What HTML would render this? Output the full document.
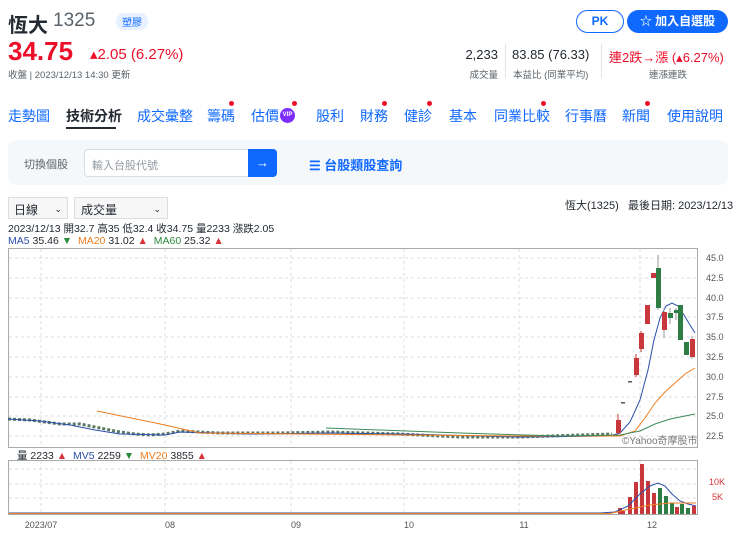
<!DOCTYPE html>
<html><head><meta charset="utf-8"><style>
*{margin:0;padding:0;box-sizing:border-box}
body{width:735px;height:540px;background:#fff;font-family:"Liberation Sans","Noto Sans CJK TC",sans-serif;position:relative;overflow:hidden;color:#232a31}
.a{position:absolute;white-space:nowrap}
.tab{position:absolute;top:106px;font-size:14px;color:#0f69ff}
.dot{position:absolute;width:5px;height:5px;border-radius:50%;background:#eb0f29}
</style></head><body>
<div class="a" style="left:8px;top:9px;font-size:20px;font-weight:bold">恆大</div>
<div class="a" style="left:53px;top:10px;font-size:19px;color:#5b636a">1325</div>
<div class="a" style="left:116px;top:13px;font-size:10px;color:#0f69ff;background:#e6f0ff;border-radius:8px;padding:1px 6px">塑膠</div>
<div class="a" style="left:576px;top:10px;width:48px;height:23px;border:1px solid #0f69ff;border-radius:12px;color:#0f69ff;font-size:12px;font-weight:bold;text-align:center;line-height:21px">PK</div>
<div class="a" style="left:627px;top:10px;width:101px;height:23px;background:#0f69ff;border-radius:12px;color:#fff;font-size:12px;font-weight:bold;text-align:center;line-height:23px">☆ 加入自選股</div>
<div class="a" style="left:8px;top:36px;font-size:26px;font-weight:bold;color:#eb0f29">34.75</div>
<div class="a" style="left:90px;top:45px;font-size:15px;color:#eb0f29">▴2.05 (6.27%)</div>
<div class="a" style="left:8px;top:67px;font-size:9.5px;color:#5b636a">收盤 | 2023/12/13 14:30 更新</div>
<div class="a" style="left:460px;top:47px;width:38px;text-align:right;font-size:13px">2,233</div>
<div class="a" style="left:460px;top:67px;width:38px;text-align:right;font-size:9.5px;color:#5b636a">成交量</div>
<div class="a" style="left:505px;top:44px;width:1px;height:34px;background:#e0e4e9"></div>
<div class="a" style="left:512px;top:47px;font-size:13px">83.85 (76.33)</div>
<div class="a" style="left:513px;top:67px;font-size:9.5px;color:#5b636a">本益比 (同業平均)</div>
<div class="a" style="left:601px;top:44px;width:1px;height:34px;background:#e0e4e9"></div>
<div class="a" style="left:609px;top:47px;font-size:13px;color:#eb0f29">連2跌→漲 (▴6.27%)</div>
<div class="a" style="left:649px;top:67px;font-size:9.5px;color:#5b636a">連漲連跌</div>
<div class="tab" style="left:8px">走勢圖</div>
<div class="tab" style="left:66px;color:#232a31;font-weight:bold">技術分析</div>
<div class="a" style="left:66px;top:127px;width:50px;height:2px;background:#232a31"></div>
<div class="tab" style="left:137px">成交彙整</div>
<div class="tab" style="left:207px">籌碼</div><div class="dot" style="left:229px;top:101px"></div>
<div class="tab" style="left:251px">估價</div><div class="a" style="left:280px;top:108px;width:15px;height:15px;border-radius:50%;background:#7d2eff;color:#fff;font-size:6px;font-weight:bold;text-align:center;line-height:15px">VIP</div><div class="dot" style="left:292px;top:101px"></div>
<div class="tab" style="left:316px">股利</div>
<div class="tab" style="left:360px">財務</div><div class="dot" style="left:382px;top:101px"></div>
<div class="tab" style="left:404px">健診</div><div class="dot" style="left:427px;top:101px"></div>
<div class="tab" style="left:449px">基本</div>
<div class="tab" style="left:494px">同業比較</div><div class="dot" style="left:541px;top:101px"></div>
<div class="tab" style="left:565px">行事曆</div>
<div class="tab" style="left:622px">新聞</div><div class="dot" style="left:645px;top:101px"></div>
<div class="tab" style="left:667px">使用說明</div>
<div class="a" style="left:8px;top:140px;width:720px;height:45px;background:#f5f8fa;border-radius:8px"></div>
<div class="a" style="left:24px;top:156px;font-size:11px;color:#5b636a">切換個股</div>
<div class="a" style="left:84px;top:149px;width:165px;height:28px;background:#fff;border:1px solid #d9dde2;border-radius:4px 0 0 4px"></div>
<div class="a" style="left:92px;top:157px;font-size:11px;color:#959ba2">輸入台股代號</div>
<div class="a" style="left:248px;top:149px;width:29px;height:28px;background:#0f69ff;border-radius:0 4px 4px 0;color:#fff;text-align:center;line-height:27px;font-size:13px">→</div>
<div class="a" style="left:309px;top:155px;font-size:13px;color:#0f69ff;font-weight:bold">☰ 台股類股查詢</div>
<div class="a" style="left:8px;top:197px;width:60px;height:22px;border:1px solid #ddd;background:#f7f7f7;font-size:12px;padding:3px 5px">日線 <span style="float:right;font-size:9px;line-height:16px">⌄</span></div>
<div class="a" style="left:74px;top:197px;width:94px;height:22px;border:1px solid #ddd;background:#f7f7f7;font-size:12px;padding:3px 6px">成交量 <span style="float:right;font-size:9px;line-height:16px">⌄</span></div>
<div class="a" style="left:565px;top:197px;font-size:11px">恆大(1325)&nbsp;&nbsp; 最後日期: 2023/12/13</div>
<div class="a" style="left:8px;top:221px;font-size:10.5px">2023/12/13 開32.7 高35 低32.4 收34.75 量2233 漲跌2.05</div>
<div class="a" style="left:8px;top:235px;font-size:10.5px"><span style="color:#2b4fa8">MA5</span> 35.46 <span style="color:#2a8a3c">▼</span>&nbsp; <span style="color:#ee7d1f">MA20</span> 31.02 <span style="color:#d9333a">▲</span>&nbsp; <span style="color:#2a8a3c">MA60</span> 25.32 <span style="color:#d9333a">▲</span></div>
<div class="a" style="left:17px;top:448px;font-size:10.5px">量 2233 <span style="color:#d9333a">▲</span>&nbsp; <span style="color:#2b4fa8">MV5</span> 2259 <span style="color:#2a8a3c">▼</span>&nbsp; <span style="color:#ee7d1f">MV20</span> 3855 <span style="color:#d9333a">▲</span></div>
<svg class="a" style="left:0;top:0" width="735" height="540" font-family="Liberation Sans" font-size="9" fill="#555">
<g stroke="#ddd" stroke-dasharray="3,3" fill="none">
<path d="M9 258H697M9 278H697M9 298H697M9 317H697M9 337H697M9 357H697M9 377H697M9 397H697M9 416H697M9 436H697"/>
<path d="M41 249V447M165 249V447M291 249V447M404 249V447M519 249V447M640 249V447"/>
<path d="M9 469H697M9 484H697M9 498H697M41 461V514M165 461V514M291 461V514M404 461V514M519 461V514M640 461V514"/>
</g>
<rect x="8.5" y="248.5" width="689" height="199" fill="none" stroke="#aaa"/>
<rect x="8.5" y="460.5" width="689" height="54" fill="none" stroke="#aaa"/>
<text x="706" y="261">45.0</text><text x="706" y="281">42.5</text><text x="706" y="301">40.0</text><text x="706" y="320">37.5</text><text x="706" y="340">35.0</text><text x="706" y="360">32.5</text><text x="706" y="380">30.0</text><text x="706" y="400">27.5</text><text x="706" y="419">25.0</text><text x="706" y="439">22.5</text>
<text x="622" y="444" font-size="10" fill="#777">©Yahoo奇摩股市</text>
<text x="709" y="485" fill="#d9333a">10K</text><text x="712" y="500" fill="#d9333a">5K</text>
<text x="41" y="528" text-anchor="middle">2023/07</text><text x="170" y="528" text-anchor="middle">08</text><text x="296" y="528" text-anchor="middle">09</text><text x="409" y="528" text-anchor="middle">10</text><text x="524" y="528" text-anchor="middle">11</text><text x="652" y="528" text-anchor="middle">12</text>
<polyline fill="none" stroke="#5a7a66" stroke-width="3" stroke-dasharray="3,2" points="8,419 30,420 60,424 80,424 100,428 120,432 135,434 150,435 165,434 180,431 220,433 280,433 330,432 400,434 460,437 520,437 580,435 612,434"/>
<polyline fill="none" stroke="#2b4fa8" stroke-width="1" points="8,419 40,421 70,425 95,430 120,434 165,435 180,432 250,434 330,433 400,434 520,437 610,436 620,433 630,422 640,400 648,370 654,340 660,318 666,306 672,303 678,306 684,315 690,325 695,333"/>
<polyline fill="none" stroke="#ee7d1f" stroke-width="1" points="97,411 165,425 200,433 300,434 520,436 620,436 635,431 645,418 655,403 665,392 675,383 685,374 695,368"/>
<polyline fill="none" stroke="#3d8a5a" stroke-width="1" points="326,428 460,433 560,436 620,435 640,431 655,424 670,419 685,416 695,414"/>
<g stroke-width="1">
<line x1="618" y1="414" x2="618" y2="434" stroke="#c0392b"/><rect x="616" y="420" width="5" height="13" fill="#c8373c"/>
<rect x="621" y="402" width="4" height="1.5" fill="#555"/><rect x="628" y="381" width="4" height="1.5" fill="#555"/>
<line x1="636" y1="354" x2="636" y2="377" stroke="#c0392b"/><rect x="634" y="358" width="5" height="17" fill="#c8373c"/>
<line x1="641" y1="331" x2="641" y2="352" stroke="#c0392b"/><rect x="639" y="333" width="5" height="16" fill="#c8373c"/>
<rect x="645" y="305" width="5" height="19" fill="#c8373c"/>
<rect x="651" y="273" width="5" height="5" fill="#c8373c"/>
<line x1="658" y1="255" x2="658" y2="310" stroke="#999"/><rect x="656" y="268" width="5" height="40" fill="#2e7d45"/>
<line x1="664" y1="308" x2="664" y2="338" stroke="#999"/><rect x="662" y="312" width="5" height="18" fill="#c8373c"/>
<line x1="670" y1="308" x2="670" y2="324" stroke="#999"/><rect x="668" y="313" width="5" height="5" fill="#2e7d45"/>
<line x1="676" y1="308" x2="676" y2="320" stroke="#999"/><rect x="674" y="310" width="5" height="3" fill="#2e7d45"/>
<rect x="678" y="305" width="5" height="35" fill="#2e7d45"/>
<rect x="684" y="342" width="5" height="13" fill="#2e7d45"/>
<line x1="692" y1="336" x2="692" y2="359" stroke="#999"/><rect x="690" y="339" width="5" height="18" fill="#c8373c"/>
</g>
<g>
<rect x="618" y="508" width="4" height="6" fill="#c8373c"/><rect x="622" y="511" width="3" height="3" fill="#c8373c"/>
<rect x="628" y="497" width="4" height="17" fill="#c8373c"/><rect x="634" y="482" width="4" height="32" fill="#c8373c"/>
<rect x="640" y="464" width="4" height="50" fill="#c8373c"/><rect x="646" y="481" width="4" height="33" fill="#c8373c"/>
<rect x="652" y="493" width="4" height="21" fill="#c8373c"/><rect x="658" y="488" width="4" height="26" fill="#2e7d45"/>
<rect x="664" y="496" width="4" height="18" fill="#2e7d45"/><rect x="670" y="503" width="4" height="11" fill="#2e7d45"/>
<rect x="675" y="507" width="4" height="7" fill="#c8373c"/><rect x="680" y="504" width="4" height="10" fill="#2e7d45"/>
<rect x="686" y="508" width="4" height="6" fill="#2e7d45"/><rect x="692" y="506" width="4" height="8" fill="#c8373c"/>
</g>
<polyline fill="none" stroke="#2b4fa8" points="9,513 600,513 615,512 628,506 640,494 650,486 658,483 665,486 672,494 680,501 688,504 696,506"/>
<polyline fill="none" stroke="#ee7d1f" points="9,513.5 610,513.5 630,509 650,505 670,503 696,503"/>
</svg>
</body></html>
